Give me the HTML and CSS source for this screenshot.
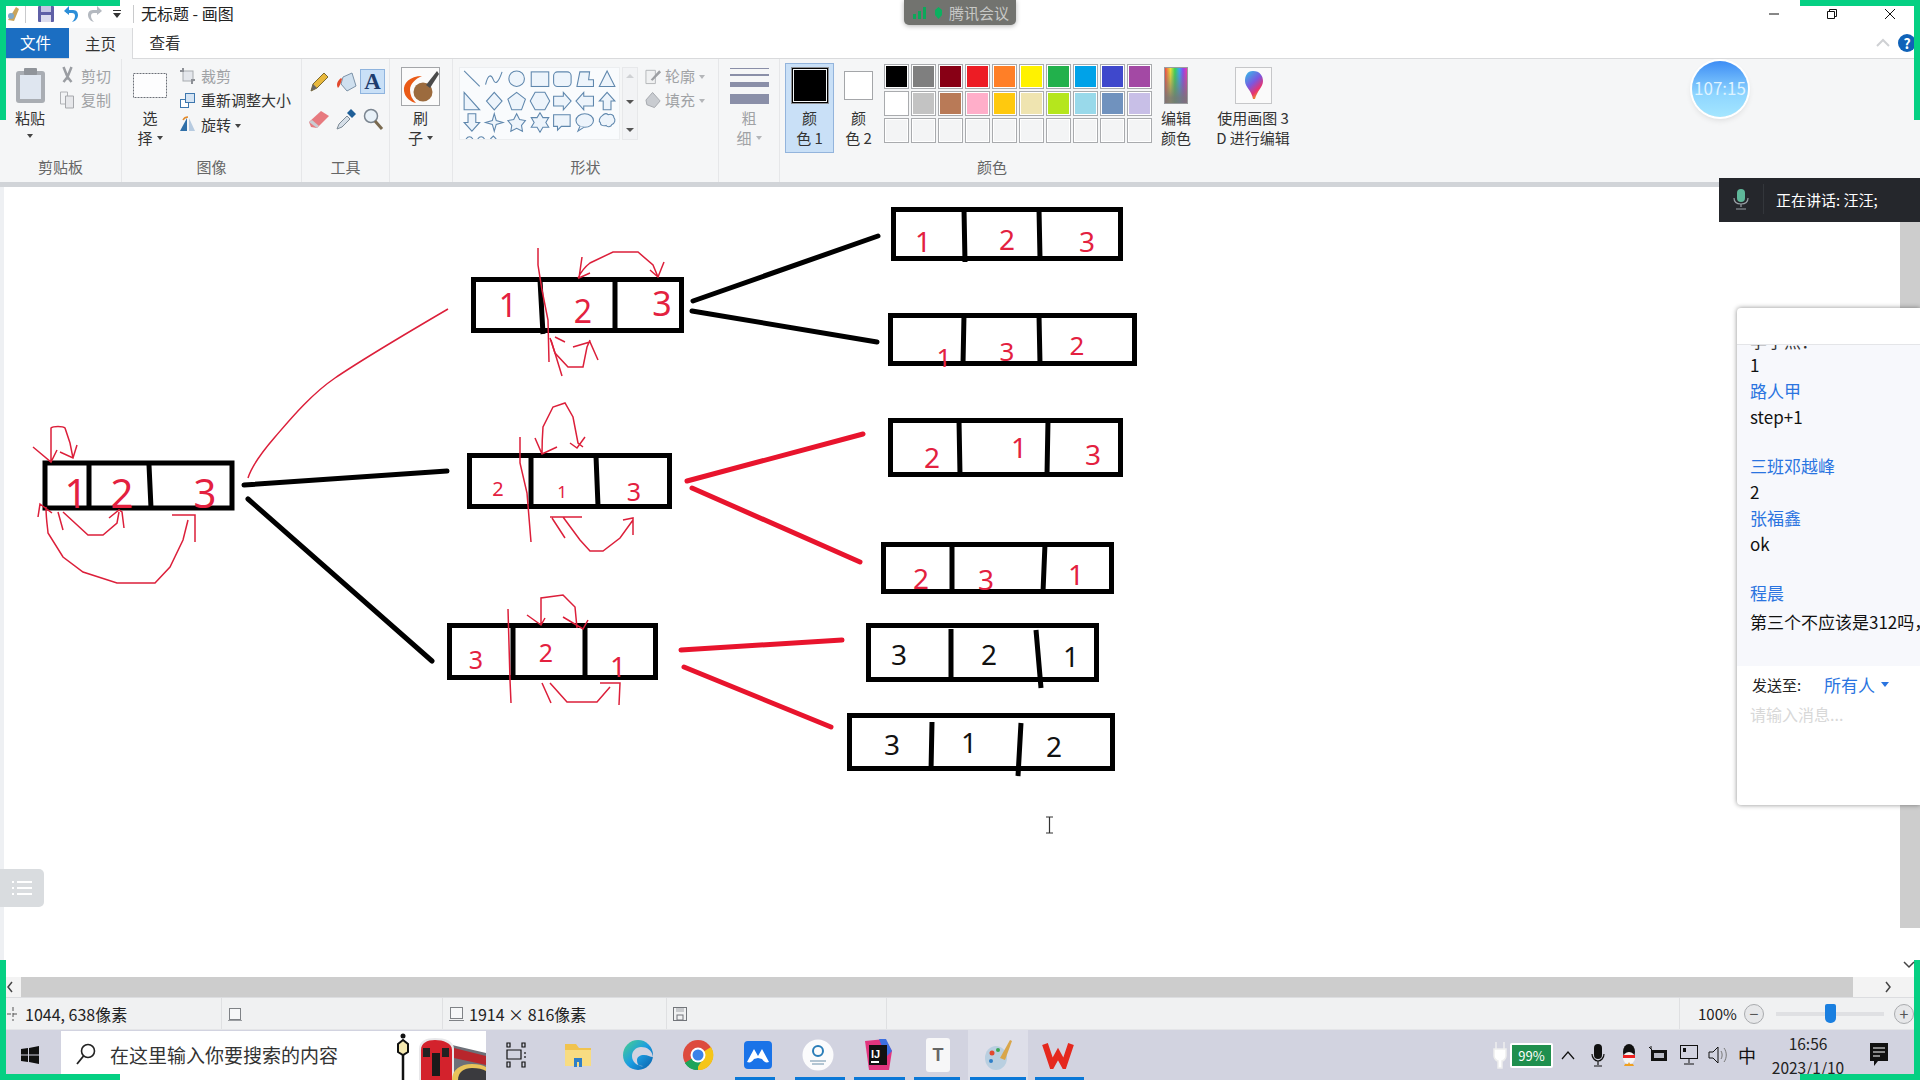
FILE: index.html
```html
<!DOCTYPE html>
<html lang="zh-CN">
<head>
    <meta charset="UTF-8">
    <title>无标题 - 画图</title>
    <link rel="stylesheet" href="styles.css">
</head>
<body>
<div class="app">
    <!-- title bar -->
    <div class="titlebar">
        <svg class="qa qa-paint" width="12" height="20" viewBox="0 0 12 20"><path d="M0 16 8 3l3 2-5 12z" fill="#c9a45c"/><circle cx="3" cy="12" r="3" fill="#7fa8c9"/></svg>
        <span class="qa-sep"></span>
        <svg class="qa qa-save" width="18" height="18" viewBox="0 0 18 18"><rect x="1" y="1" width="16" height="16" rx="1" fill="#5f60a6"/><rect x="4" y="1" width="10" height="6" fill="#c5c6e4"/><rect x="4" y="10" width="10" height="7" fill="#dcdcee"/></svg>
        <svg class="qa qa-undo" width="18" height="20" viewBox="0 0 18 20"><path d="M3 6h7c4 0 5 3 5 5 0 3-2 6-6 7 2-2 3-4 3-6 0-2-1-3-3-3H3z" fill="#2c8ed8"/><path d="M1 7 6 2v9z" fill="#2c8ed8"/></svg>
        <svg class="qa qa-redo" width="18" height="20" viewBox="0 0 18 20"><path d="M15 6H8c-4 0-5 3-5 5 0 3 2 6 6 7-2-2-3-4-3-6 0-2 1-3 3-3h6z" fill="#b4b9c0"/><path d="M17 7 12 2v9z" fill="#b4b9c0"/></svg>
        <svg class="qa qa-more" width="8" height="10" viewBox="0 0 8 10"><path d="M0 1h8v1H0zM0 4h8L4 9z" fill="#333"/></svg>
        <span class="qa-sep qa-sep-2"></span>
        <span class="title-text">无标题 - 画图</span>
        <div class="win-controls">
            <svg width="14" height="14" viewBox="0 0 14 14"><path d="M2 7h10" stroke="#111" stroke-width="1"/></svg>
            <svg width="14" height="14" viewBox="0 0 14 14"><path d="M2.500 4.500h7v7h-7zM4.500 4V2.500h7v7H10" fill="none" stroke="#111" stroke-width="1"/></svg>
            <svg width="14" height="14" viewBox="0 0 14 14"><path d="M2 2l10 10M12 2 2 12" stroke="#111" stroke-width="1"/></svg>
        </div>
    </div>

    <!-- ribbon tabs -->
    <div class="tabs">
        <span class="tab tab-file">文件</span>
        <span class="tab tab-active">主页</span>
        <span class="tab">查看</span>
        <svg class="tabs-chevron" width="14" height="10" viewBox="0 0 14 10"><path d="M1 8l6-6 6 6" fill="none" stroke="#cfd1d4" stroke-width="2"/></svg>
        <span class="help">?</span>
    </div>

    <!-- ribbon -->
    <div class="ribbon">
        <section class="group g-clip">
            <div class="group-body">
                <div class="tall tall-paste">
                    <div class="tall-icon">
                        <svg width="31" height="37" viewBox="0 0 31 37"><rect x="1" y="4" width="29" height="32" rx="3" fill="#a9adb3"/><rect x="5" y="8" width="21" height="24" fill="#dfe6f0"/><rect x="9" y="1" width="13" height="7" rx="1" fill="#90949a"/></svg>
                    </div>
                    <span>粘贴</span>
                    <i class="caret"></i>
                </div>
                <div class="small-col">
                    <div class="small off"><svg width="14" height="20" viewBox="0 0 14 20"><path d="M3 1l4 10 4-10M7 11l-4 5M7 11l4 5" fill="none" stroke="#9a9da2" stroke-width="2.500"/></svg><span>剪切</span></div>
                    <div class="small off"><svg width="16" height="18" viewBox="0 0 16 18"><path d="M1 1h7v12H1z" fill="#f2f3f5" stroke="#b0b2b6"/><path d="M6 5h8v12H6z" fill="#e6e7ea" stroke="#a6a8ac"/></svg><span>复制</span></div>
                </div>
            </div>
            <div class="group-label">剪贴板</div>
        </section>

        <section class="group g-image">
            <div class="group-body">
                <div class="tall tall-select">
                    <div class="tall-icon">
                        <svg width="36" height="37" viewBox="0 0 36 37"><rect x="1.500" y="6.500" width="33" height="24" fill="#fdfdfe" stroke="#6c7078" stroke-dasharray="2 1"/></svg>
                    </div>
                    <span>选</span>
                    <span>择<i class="caret caret-inline"></i></span>
                </div>
                <div class="small-col">
                    <div class="small off"><svg width="17" height="18" viewBox="0 0 17 18"><rect x="4" y="4" width="10" height="10" fill="#e4e7ec" stroke="#a8abb0"/><path d="M1 4h4M4 1v4M13 17v-4M16 13h-4" stroke="#8d9096" stroke-width="2"/></svg><span>裁剪</span></div>
                    <div class="small"><svg width="17" height="18" viewBox="0 0 17 18"><rect x="1.500" y="8.500" width="8" height="8" fill="#fff" stroke="#3e77ae"/><rect x="6.500" y="2.500" width="9" height="9" fill="#d5e4f3" stroke="#3e77ae"/></svg><span>重新调整大小</span></div>
                    <div class="small"><svg width="17" height="18" viewBox="0 0 17 18"><path d="M8 3v13H1z" fill="#2f6fa8"/><path d="M10 3v13h6z" fill="#b7cbe0"/><path d="M4 5c1-2 3-3 5-3" fill="none" stroke="#e28a2b" stroke-width="1.500"/></svg><span>旋转<i class="caret caret-inline"></i></span></div>
                </div>
            </div>
            <div class="group-label">图像</div>
        </section>

        <section class="group g-tools">
            <div class="group-body">
                <div class="tool-grid">
                    <span class="tool"><svg width="22" height="24" viewBox="0 0 22 24"><path d="M3 21l2-7L16 3l4 4L9 18z" fill="#e8b83c" stroke="#7c6a2f"/><path d="M3 21l2-7 4 4z" fill="#666"/></svg></span>
                    <span class="tool"><svg width="22" height="24" viewBox="0 0 22 24"><path d="M8 7l9-4 4 13-9 5-6-7z" fill="#cfe0ef" stroke="#7d93a8"/><path d="M6 8C2 11 1 15 3 18c2-2 3-6 4-9z" fill="#e2492d"/></svg></span>
                    <span class="tool tool-on"><b class="tool-a">A</b></span>
                    <span class="tool"><svg width="24" height="22" viewBox="0 0 24 22"><path d="M2 14 14 3l8 5-12 12-6-1z" fill="#e77a7f"/><path d="M2 14l8 6 2-2-7-6z" fill="#c9ccd2"/></svg></span>
                    <span class="tool"><svg width="22" height="24" viewBox="0 0 22 24"><path d="M2 22l2-5 8-8 3 3-8 8z" fill="#d6dfe8" stroke="#7c8a96"/><path d="M12 6l4-4 5 5-4 4z" fill="#1f5f98"/></svg></span>
                    <span class="tool"><svg width="22" height="24" viewBox="0 0 22 24"><circle cx="9" cy="9" r="6.500" fill="#e8f1f8" stroke="#7a8590" stroke-width="1.500"/><path d="M13 14l7 8" stroke="#7a6a50" stroke-width="3"/></svg></span>
                </div>
            </div>
            <div class="group-label">工具</div>
        </section>

        <section class="group g-brush">
            <div class="group-body">
                <div class="tall tall-brush">
                    <div class="tall-icon">
                        <svg width="39" height="39" viewBox="0 0 39 39"><rect x=".5" y=".5" width="38" height="38" fill="#fbfbfb" stroke="#a4a6a9"/><path d="M21 9C9 9 2 16 3 24c1 7 7 11 12 12-4-4-6-8-6-13 0-6 5-11 12-14z" fill="#ea5a16"/><circle cx="22" cy="25" r="9.500" fill="#9c6b3e"/><path d="M25 18 36 4l2 3-9 14z" fill="#4a4a4a"/></svg>
                    </div>
                    <span>刷</span>
                    <span>子<i class="caret caret-inline"></i></span>
                </div>
            </div>
            <div class="group-label"></div>
        </section>

        <section class="group g-shapes">
            <div class="group-body">
                <svg class="gallery" width="161" height="73" viewBox="0 0 161 73">
                    <g fill="#edf4fb" stroke="#5f87ad" stroke-width="1.100">
                        <path d="M3 3l16 16" fill="none"/>
                        <path d="M25 17c3-12 6-10 8-5s5 4 9-8" fill="none"/>
                        <circle cx="57" cy="11" r="8"/>
                        <rect x="72" y="4" width="18" height="15"/>
                        <rect x="95" y="4" width="18" height="15" rx="4"/>
                        <path d="M119 19l3-15h10l-1 8h5v7z"/>
                        <path d="M150 3l8 16h-16z"/>
                        <path d="M3 25l16 18H3z"/>
                        <path d="M34 25l8 9-8 9-8-9z"/>
                        <path d="M57 25l9 7-4 11H52l-4-11z"/>
                        <path d="M76 25h10l5 9-5 9H76l-5-9z"/>
                        <path d="M95 29h10v-4l8 9-8 9v-4H95z"/>
                        <path d="M136 29h-10v-4l-8 9 8 9v-4h10z"/>
                        <path d="M150 25l8 9h-4v9h-8v-9h-4z"/>
                        <path d="M7 47h8v9h4l-8 9-8-9h4z"/>
                        <path d="M34 47l2 7 7 2-7 2-2 7-2-7-7-2 7-2z"/>
                        <path d="M57 47l3 6 6 1-4 5 1 6-6-3-6 3 1-6-4-5 6-1z"/>
                        <path d="M81 46l3 5 6 0-3 5 3 5-6 0-3 5-3-5-6 0 3-5-3-5 6 0z"/>
                        <path d="M95 48h17v12h-9l-4 4v-4h-4z"/>
                        <ellipse cx="127" cy="54" rx="9" ry="7"/>
                        <path d="M122 60l-2 5 6-4"/>
                        <path d="M145 49c3-3 5-2 6-1 3-1 6 0 6 3 2 2 1 6-2 7-1 3-5 3-6 1-3 1-6 0-6-3-2-1-1-5 2-7z"/>
                        <path d="M5 73c2-3 5-3 7 0M17 73c2-3 5-3 7 0M30 73l3-3 3 3" fill="none"/>
                    </g>
                </svg>
                <div class="gallery-scroll">
                    <i class="gs-up"></i><i class="gs-down"></i><i class="gs-more"></i>
                </div>
                <div class="small-col small-col-shapes">
                    <div class="small off"><svg width="18" height="18" viewBox="0 0 18 18"><path d="M1 3h10v14H1z" fill="#f0f1f2" stroke="#b3b5b8"/><path d="M6 13 15 3l2 2-9 9z" fill="#9d9fa3"/></svg><span>轮廓<i class="caret caret-inline caret-pale"></i></span></div>
                    <div class="small off"><svg width="18" height="18" viewBox="0 0 18 18"><path d="M8 1l8 9-6 7-8-3-1-5z" fill="#c9ccd1" stroke="#a4a7ac"/></svg><span>填充<i class="caret caret-inline caret-pale"></i></span></div>
                </div>
            </div>
            <div class="group-label">形状</div>
        </section>

        <section class="group g-thick">
            <div class="group-body">
                <div class="tall tall-thick off">
                    <div class="tall-icon thick-icon">
                        <i class="thick-1"></i><i class="thick-2"></i><i class="thick-3"></i><i class="thick-4"></i>
                    </div>
                    <span>粗</span>
                    <span>细<i class="caret caret-inline caret-pale"></i></span>
                </div>
            </div>
            <div class="group-label"></div>
        </section>

        <section class="group g-colors">
            <div class="group-body">
                <div class="tall tall-color tall-color-on">
                    <div class="tall-icon"><i class="color-big"></i></div>
                    <span>颜</span>
                    <span>色 1</span>
                </div>
                <div class="tall tall-color">
                    <div class="tall-icon"><i class="color-small"></i></div>
                    <span>颜</span>
                    <span>色 2</span>
                </div>
                <div class="palette">
                    <i class="sw c1"></i><i class="sw c2"></i><i class="sw c3"></i><i class="sw c4"></i><i class="sw c5"></i><i class="sw c6"></i><i class="sw c7"></i><i class="sw c8"></i><i class="sw c9"></i><i class="sw c10"></i>
                    <i class="sw c11"></i><i class="sw c12"></i><i class="sw c13"></i><i class="sw c14"></i><i class="sw c15"></i><i class="sw c16"></i><i class="sw c17"></i><i class="sw c18"></i><i class="sw c19"></i><i class="sw c20"></i>
                    <i class="sw"></i><i class="sw"></i><i class="sw"></i><i class="sw"></i><i class="sw"></i><i class="sw"></i><i class="sw"></i><i class="sw"></i><i class="sw"></i><i class="sw"></i>
                </div>
                <div class="tall tall-edit">
                    <div class="tall-icon"><i class="rainbow"></i></div>
                    <span>编辑</span>
                    <span>颜色</span>
                </div>
            </div>
            <div class="group-label">颜色</div>
        </section>

        <section class="group g-p3d">
            <div class="group-body">
                <div class="tall tall-p3d">
                    <div class="tall-icon">
                        <svg width="37" height="37" viewBox="0 0 37 37"><defs><linearGradient id="p3d" x1="0" y1="0" x2=".6" y2="1"><stop offset="0" stop-color="#2fc3e8"/><stop offset=".5" stop-color="#7a58e0"/><stop offset=".8" stop-color="#e8326f"/><stop offset="1" stop-color="#f0a020"/></linearGradient></defs><rect x=".5" y=".5" width="36" height="36" fill="#fafafa" stroke="#c6c7c9"/><path d="M18 4c7 0 10 5 10 10 0 6-6 10-8 18h-2c-1-8-8-12-8-18C10 9 12 4 18 4z" fill="url(#p3d)"/></svg>
                    </div>
                    <span>使用画图 3</span>
                    <span>D 进行编辑</span>
                </div>
            </div>
        </section>
    </div>
    <div class="ribbon-edge"></div>

    <!-- drawing surface -->
    <div class="canvas">
        <svg class="drawing" viewBox="0 187 1920 790" width="1920" height="790">
            <rect x="0" y="187" width="4" height="790" fill="#eef0f3"/>

            <g class="boxes">
                <rect x="45" y="463" width="187" height="45"/>
                <path d="M89 463v45M149 465l2 43"/>
                <rect x="473.500" y="279.500" width="208" height="51"/>
                <path d="M540 280l3 54M615 280v50"/>
                <rect x="469.500" y="455.500" width="200" height="51"/>
                <path d="M531 456v50M596 456l2 50"/>
                <rect x="449.500" y="625.500" width="206" height="52"/>
                <path d="M513 625v53M585 625v53"/>
                <rect x="893.500" y="209.500" width="227" height="49"/>
                <path d="M964 209l1 53M1039 209l1 49"/>
                <rect x="890.500" y="315.500" width="244" height="48"/>
                <path d="M964 315l-1 49M1039 315l1 49"/>
                <rect x="890.500" y="420.500" width="230" height="54"/>
                <path d="M959 420l1 55M1048 420l-1 55"/>
                <rect x="883.500" y="544.500" width="228" height="47"/>
                <path d="M952 544v48M1045 544l-2 48"/>
                <rect x="868.500" y="625.500" width="228" height="54"/>
                <path d="M951 629v49M1036 630l5 58"/>
                <rect x="849.500" y="715.500" width="263" height="53"/>
                <path d="M932 722l-1 49M1021 723l-3 53"/>
            </g>

            <g class="ink-black">
                <path d="M244 485 447 471M248 499 432 661M693 301 878 236M692 311 877 342"/>
            </g>
            <g class="ink-red">
                <path d="M687 481 863 434M692 488 860 562M681 650 842 640M684 667 831 727"/>
            </g>

            <g class="pen">
                <path d="M248 478C252 465 262 452 275 437S310 395 335 378 395 340 448 309"/>
                <path d="M51 462V428C53 426 63 426 65 428L70 443 73 458M33 447 51 462 57 450M60 452 73 458 77 445"/>
                <path d="M63 512 88 535H103L117 523 119 512M58 512 63 530M109 518 119 510 122 512 124 528"/>
                <path d="M46 507C46 520 48 530 48 533L63 557 83 572 117 583H155L170 567 183 540 188 520M38 517 40 504 52 513M172 515H195V542"/>
                <path d="M538 248V265L542 290 548 320 549 362M551 340 562 376"/>
                <path d="M578 278C582 270 586 266 590 263L613 252H638L653 265 658 277M582 257 579 278 590 273M650 270 658 277 664 262"/>
                <path d="M550 338 555 353 568 367H583L587 347 590 340M573 347 590 342 598 360M555 337 565 342"/>
                <path d="M520 437V463L527 493 531 542"/>
                <path d="M542 454C542 440 543 427 543 427L553 407 565 403 573 417 578 443 583 447M535 438 542 454 557 447M570 443 577 448 585 437"/>
                <path d="M563 517 580 540 590 551H603L620 538 633 520M550 517H582M552 518 565 538M623 520 633 518V535"/>
                <path d="M508 609 510 680 511 703"/>
                <path d="M541 625V598L563 595 575 607 577 628M527 615 541 625 545 618M563 617 583 629 588 620"/>
                <path d="M550 683 567 702H597L610 687M542 683 551 703M600 683H620L619 705"/>
            </g>

            <g class="num num-red">
                <text x="76" y="508" font-size="40">1</text>
                <text x="122" y="508" font-size="40">2</text>
                <text x="205" y="508" font-size="40">3</text>
                <text x="508" y="317" font-size="32">1</text>
                <text x="583" y="323" font-size="32">2</text>
                <text x="662" y="316" font-size="34">3</text>
                <text x="498" y="496" font-size="20">2</text>
                <text x="562" y="498" font-size="17">1</text>
                <text x="634" y="501" font-size="25">3</text>
                <text x="476" y="669" font-size="25">3</text>
                <text x="546" y="662" font-size="25">2</text>
                <text x="618" y="677" font-size="28">1</text>
                <text x="923" y="252" font-size="28">1</text>
                <text x="1007" y="250" font-size="28">2</text>
                <text x="1087" y="252" font-size="28">3</text>
                <text x="944" y="367" font-size="26">1</text>
                <text x="1007" y="361" font-size="26">3</text>
                <text x="1077" y="355" font-size="26">2</text>
                <text x="932" y="468" font-size="28">2</text>
                <text x="1019" y="458" font-size="28">1</text>
                <text x="1093" y="465" font-size="28">3</text>
                <text x="921" y="589" font-size="28">2</text>
                <text x="986" y="590" font-size="28">3</text>
                <text x="1076" y="585" font-size="28">1</text>
            </g>
            <g class="num num-black">
                <text x="899" y="665" font-size="28">3</text>
                <text x="989" y="665" font-size="28">2</text>
                <text x="1071" y="667" font-size="28">1</text>
                <text x="892" y="755" font-size="28">3</text>
                <text x="969" y="753" font-size="28">1</text>
                <text x="1054" y="757" font-size="28">2</text>
            </g>
        </svg>

        <div class="list-toggle">
            <svg width="22" height="18" viewBox="0 0 22 18"><path d="M6 3h15M6 9h15M6 15h15M1 3h2M1 9h2M1 15h2" stroke="#fff" stroke-width="2"/></svg>
        </div>
        <svg class="ibeam" width="9" height="18" viewBox="0 0 9 18"><path d="M1 1h7M1 17h7M4.500 1v16" stroke="#333" stroke-width="1.200" fill="none"/></svg>
    </div>

    <!-- horizontal scroll bar -->
    <div class="hscroll">
        <svg width="8" height="12" viewBox="0 0 8 12"><path d="M6 1 2 6l4 5" fill="none" stroke="#444" stroke-width="1.500"/></svg>
        <div class="hscroll-thumb"></div>
        <svg class="hscroll-next" width="8" height="12" viewBox="0 0 8 12"><path d="M2 1l4 5-4 5" fill="none" stroke="#444" stroke-width="1.500"/></svg>
    </div>

    <!-- status bar -->
    <div class="status">
        <div class="st st-pos">
            <svg width="14" height="16" viewBox="0 0 14 16"><path d="M7 1v14M1 8h12" stroke="#555" stroke-dasharray="4 2"/></svg>
            <span>1044, 638像素</span>
        </div>
        <div class="st st-sel">
            <svg width="16" height="16" viewBox="0 0 16 16"><rect x="2.500" y="2.500" width="11" height="11" fill="#f6f7f8" stroke="#7f8286"/><path d="M1 14.500h14" stroke="#9a9da1"/></svg>
        </div>
        <div class="st st-size">
            <svg width="16" height="16" viewBox="0 0 16 16"><rect x="2.500" y="1.500" width="12" height="11" fill="#f6f7f8" stroke="#7f8286"/><path d="M1 14.500h15" stroke="#7f8286"/></svg>
            <span>1914 × 816像素</span>
        </div>
        <div class="st st-save">
            <svg width="16" height="16" viewBox="0 0 16 16"><rect x="1.500" y="1.500" width="13" height="13" fill="none" stroke="#72757a"/><rect x="4" y="2" width="8" height="4" fill="#c8cacd"/><rect x="5" y="9" width="6" height="5" fill="none" stroke="#72757a"/></svg>
        </div>
        <div class="st st-blank"></div>
        <div class="st st-zoom">
            <span class="zoom-value">100%</span>
            <span class="zoom-btn">−</span>
            <div class="zoom-track"><i class="zoom-thumb"></i></div>
            <span class="zoom-btn">+</span>
        </div>
    </div>

    <!-- windows taskbar -->
    <div class="taskbar">
        <svg class="start" width="18" height="18" viewBox="0 0 18 18"><path d="M0 3l7-1v6.500H0zM8 2l10-2v8.500H8zM0 9.500h7V16l-7-1zM8 9.500h10V18L8 16z" fill="#111"/></svg>
        <div class="search">
            <svg width="24" height="24" viewBox="0 0 24 24"><circle cx="14" cy="9" r="6.500" fill="none" stroke="#222" stroke-width="1.600"/><path d="M9.500 14 3 22" stroke="#222" stroke-width="1.800"/></svg>
            <span>在这里输入你要搜索的内容</span>
            <div class="search-art">
                <svg width="90" height="49" viewBox="0 0 90 49">
                    <path d="M7 22V49" stroke="#111" stroke-width="2.500"/>
                    <path d="M2 13l5-4 5 4v8l-5 3-5-3z" fill="#f5e9b0" stroke="#111" stroke-width="2"/>
                    <circle cx="7" cy="5" r="2.500" fill="#111"/>
                    <path d="M56 14 90 22v27H56z" fill="#6d7078"/>
                    <path d="M58 17 90 25v9L58 27z" fill="#b8262c"/>
                    <path d="M23 49V18C23 10 30 7 39 7c10 0 19 3 19 11v31z" fill="#e8e8ea"/>
                    <path d="M25 49V19C25 12 31 9 39 9s17 3 17 10v30z" fill="#d3222c"/>
                    <rect x="36" y="22" width="8" height="23" fill="#1a1a1a"/>
                    <rect x="27" y="17" width="7" height="9" fill="#222"/>
                    <rect x="46" y="17" width="7" height="9" fill="#222"/>
                    <path d="M56 49c0-10 8-16 20-16 6 0 11 1 14 3v13z" fill="#e8c25a"/>
                    <path d="M62 49c0-8 6-12 14-12 6 0 11 1 14 3v9z" fill="#3a3a3e"/>
                </svg>
            </div>
        </div>
        <div class="task-icons">
            <span class="task task-view"><svg width="20" height="26" viewBox="0 0 20 26"><path d="M1 1h3v4H1zM16 1h3v4h-3zM1 8h14v9H1zM1 20h3v5H1zM16 20h3v5h-3z" fill="none" stroke="#111" stroke-width="1.200"/><path d="M19 10v2M19 14v2" stroke="#111" stroke-width="1.200"/></svg></span>
            <span class="task"><svg width="30" height="30" viewBox="0 0 30 30"><path d="M2 4h11l3 4h12v18H2z" fill="#f1c34e"/><path d="M2 10h26v16H2z" fill="#f8dc82"/><path d="M11 27V18h8v9h-3v-5h-2v5z" fill="#2f7fc8"/></svg></span>
            <span class="task"><svg width="32" height="32" viewBox="0 0 32 32"><defs><linearGradient id="edge" x1="0" y1="0" x2="1" y2="1"><stop offset="0" stop-color="#4bd28a"/><stop offset=".5" stop-color="#1b9de2"/><stop offset="1" stop-color="#0a5ea8"/></linearGradient></defs><circle cx="16" cy="16" r="15" fill="url(#edge)"/><path d="M31 18c-1-7-6-10-12-10-5 0-9 4-9 9 0 6 5 10 11 10-4 1-6-2-6-6 0-3 3-5 7-5 4 0 6 2 9 2z" fill="#d2d3e0"/></svg></span>
            <span class="task"><svg width="32" height="32" viewBox="0 0 32 32"><circle cx="16" cy="16" r="15" fill="#dd4b3e"/><path d="M16 16 3 24A15 15 0 0 0 16 31z" fill="#1ea45a"/><path d="M16 16 29 8A15 15 0 0 1 16 31z" fill="#f5c518"/><path d="M16 16 3 24A15 15 0 0 0 14 31L22 18z" fill="#1ea45a"/><circle cx="16" cy="16" r="7.500" fill="#fff"/><circle cx="16" cy="16" r="5.500" fill="#3b82e8"/></svg></span>
            <span class="task"><svg width="30" height="32" viewBox="0 0 30 32"><rect x="1" y="2" width="28" height="28" rx="4" fill="#1a73e8"/><path d="M4 23 11 10l4 7 4-7 7 13c-3 1-5 0-7-3l-4-1-4 1c-2 3-4 4-7 3z" fill="#fff"/></svg></span>
            <span class="task"><svg width="32" height="36" viewBox="0 0 32 36"><circle cx="16" cy="18" r="15.500" fill="#fbfbfc"/><circle cx="16" cy="14" r="5" fill="none" stroke="#2a7db8" stroke-width="2"/><path d="M8 24h16M10 27h12" stroke="#6a8fa8"/></svg></span>
            <span class="task"><svg width="30" height="34" viewBox="0 0 30 34"><path d="M2 3 22 1l7 12-3 19H6z" fill="#e2357e"/><path d="M16 1h7l6 12-6 6z" fill="#3d6fe0"/><rect x="6" y="7" width="18" height="20" fill="#111"/><text class="ij" x="8" y="20">IJ</text><rect x="8" y="23" width="8" height="2" fill="#fff"/></svg></span>
            <span class="task"><svg width="26" height="36" viewBox="0 0 26 36"><rect x="1" y="1" width="24" height="34" rx="3" fill="#f7f7f8"/><text class="doc-t" x="13" y="24">T</text></svg></span>
            <span class="task task-on"><svg width="30" height="36" viewBox="0 0 30 36"><ellipse cx="13" cy="21" rx="11" ry="12" fill="#b9cfe0"/><circle cx="9" cy="16" r="2.500" fill="#e2492d"/><circle cx="15" cy="13" r="2" fill="#3aa655"/><circle cx="8" cy="24" r="2" fill="#2f7fc8"/><path d="M17 21 27 3l2 1-7 19z" fill="#d9a64a"/></svg></span>
            <span class="task"><svg width="32" height="28" viewBox="0 0 32 28"><path d="M3 3l7 21 6-11 6 11 7-21" fill="none" stroke="#e5281e" stroke-width="6"/></svg></span>
        </div>
        <div class="tray">
            <svg class="tray-plug" width="16" height="28" viewBox="0 0 16 28"><path d="M4 1v7M12 1v7M2 8h12v7c0 3-3 5-4 5v7H6v-7c-1 0-4-2-4-5z" fill="#fff" stroke="#eee" stroke-width="1.500"/></svg>
            <div class="battery"><span>99%</span></div>
            <svg class="tray-caret" width="14" height="10" viewBox="0 0 14 10"><path d="M1 9l6-7 6 7" fill="none" stroke="#111" stroke-width="1.200"/></svg>
            <svg class="tray-i t-mic" width="14" height="24" viewBox="0 0 14 24"><rect x="3" y="1" width="8" height="15" rx="4" fill="#111"/><path d="M1 11c0 4 3 7 6 7s6-3 6-7M7 18v4M3 23h8" fill="none" stroke="#111" stroke-width="1.200"/></svg>
            <svg class="tray-i t-qq" width="18" height="24" viewBox="0 0 18 24"><ellipse cx="9" cy="9" rx="6" ry="8" fill="#111"/><ellipse cx="9" cy="15" rx="6" ry="6" fill="#f4f4f4"/><path d="M3 12h12v3H3z" fill="#e22"/><path d="M5 21h3l1-2 1 2h3l1 2H4z" fill="#f0a020"/></svg>
            <svg class="tray-i" width="22" height="20" viewBox="0 0 22 20"><rect x="4" y="5" width="16" height="11" fill="#111"/><rect x="7" y="8" width="10" height="5" fill="#b9bbc6"/><path d="M2 2l3 3M4 1v3" stroke="#111"/></svg>
            <svg class="tray-i" width="22" height="24" viewBox="0 0 22 24"><rect x="2.500" y="2.500" width="17" height="13" fill="none" stroke="#111"/><rect x="5" y="5" width="3" height="4" fill="#111"/><path d="M11 16v4M6 21h10" stroke="#111"/></svg>
            <svg class="tray-i t-vol" width="20" height="24" viewBox="0 0 20 24"><path d="M2 9h4l5-5v16l-5-5H2z" fill="none" stroke="#111"/><path d="M14 8c1.500 2 1.500 6 0 8M17 5c3 4 3 10 0 14" fill="none" stroke="#777"/></svg>
            <span class="ime">中</span>
            <div class="clock"><span>16:56</span><span>2023/1/10</span></div>
            <svg class="tray-note" width="20" height="26" viewBox="0 0 20 26"><path d="M1 1h18v18H9l-4 5v-5H1z" fill="#111"/><path d="M4 6h12M4 10h12M4 14h7" stroke="#fff"/></svg>
        </div>
        <div class="task-lines">
            <i class="line-1"></i><i class="line-2"></i><i class="line-3"></i><i class="line-4"></i><i class="line-5"></i><i class="line-6"></i>
        </div>
    </div>

    <!-- overlays from the screen share -->
    <i class="frame frame-tl-h"></i><i class="frame frame-tl-v"></i>
    <i class="frame frame-tr-h"></i><i class="frame frame-tr-v"></i>
    <i class="frame frame-bl-h"></i><i class="frame frame-bl-v"></i>
    <i class="frame frame-br-h"></i><i class="frame frame-br-v"></i>

    <div class="meeting-tag">
        <svg width="16" height="14" viewBox="0 0 16 14"><path d="M1 8h3v5H1zM6 5h3v8H6zM11 1h3v12h-3z" fill="#0ca85a"/></svg>
        <svg width="9" height="14" viewBox="0 0 9 14"><path d="M4.500 1 8 4v5l-3.500 4L1 9V4z" fill="#0cb060"/></svg>
        <span>腾讯会议</span>
    </div>

    <div class="timer">107:15</div>

    <div class="speaking">
        <svg width="16" height="22" viewBox="0 0 16 22"><rect x="4" y="1" width="8" height="13" rx="4" fill="#5fb89a"/><path d="M1 10c0 4 3 6 7 6s7-2 7-6M8 16v3M3 21h10" fill="none" stroke="#9aa0a6" stroke-width="1.200"/></svg>
        <i class="speaking-sep"></i>
        <span>正在讲话: 汪汪;</span>
    </div>

    <i class="side-scroll side-scroll-top"></i>
    <i class="side-scroll side-scroll-bottom"></i>
    <svg class="side-arrow" width="12" height="8" viewBox="0 0 12 8"><path d="M1 1l5 5 5-5" fill="none" stroke="#444" stroke-width="1.500"/></svg>

    <div class="chat">
        <div class="chat-head"></div>
        <div class="chat-list">
            <div class="msg-clip">李子杰：</div>
            <div class="msg">1</div>
            <div class="msg name">路人甲</div>
            <div class="msg spaced">step+1</div>
            <div class="msg name">三班邓越峰</div>
            <div class="msg">2</div>
            <div class="msg name">张福鑫</div>
            <div class="msg spaced">ok</div>
            <div class="msg name">程晨</div>
            <div class="msg msg-last">第三个不应该是312吗，</div>
        </div>
        <div class="chat-send">
            <span class="send-label">发送至:</span>
            <span class="send-to">所有人</span>
            <i class="send-caret"></i>
        </div>
        <div class="chat-input">请输入消息...</div>
    </div>
</div>
</body>
</html>
```
FILE: styles.css
```css
* {
    box-sizing: border-box;
}
html, body {
    margin: 0;
    height: 100%;
}
body {
    font-family: "Noto Sans CJK SC", "Noto Sans", sans-serif;
    font-size: 15px;
    color: #333;
    background: #fff;
    overflow: hidden;
}
i {
    font-style: normal;
}
svg {
    display: block;
    flex: none;
}
.app {
    position: relative;
    width: 1920px;
    height: 1080px;
    display: flex;
    flex-direction: column;
    overflow: hidden;
}

/* title bar */
.titlebar {
    height: 28px;
    display: flex;
    align-items: center;
    background: #fff;
    flex: none;
}
.qa-paint {
    margin-left: 8px;
}
.qa-sep {
    width: 1px;
    height: 18px;
    background: #c9cacc;
    margin-left: 5px;
}
.qa-save {
    margin-left: 11px;
}
.qa-undo {
    margin-left: 8px;
}
.qa-redo {
    margin-left: 4px;
}
.qa-more {
    margin-left: 10px;
}
.qa-sep-2 {
    margin-left: 12px;
}
.title-text {
    margin-left: 7px;
    padding-bottom: 2px;
    font-size: 16px;
    color: #222;
}
.win-controls {
    margin-left: auto;
    display: flex;
    gap: 44px;
    padding-right: 23px;
}

/* tabs */
.tabs {
    height: 31px;
    display: flex;
    align-items: stretch;
    padding-left: 6px;
    background: #fff;
    border-bottom: 1px solid #d9dadc;
    flex: none;
}
.tab {
    width: 64px;
    padding-bottom: 2px;
    display: flex;
    align-items: center;
    justify-content: center;
    font-size: 15.500px;
    color: #333;
}
.tab-file {
    background: #1b6ec2;
    color: #fff;
    width: 63px;
    padding-right: 4px;
}
.tab-active {
    background: #f5f6f7;
    border-right: 1px solid #d9dadc;
    margin-bottom: -1px;
}
.tabs-chevron {
    margin-left: auto;
    align-self: center;
    margin-right: 8px;
}
.help {
    align-self: center;
    width: 18px;
    height: 18px;
    margin-right: 4px;
    border-radius: 50%;
    background: #0f62b8;
    color: #fff;
    font-size: 14px;
    font-weight: 700;
    line-height: 18px;
    text-align: center;
}

/* ribbon */
.ribbon {
    height: 123px;
    display: flex;
    background: #f5f6f7;
    flex: none;
}
.ribbon-edge {
    height: 5px;
    background: #d1d4d8;
    flex: none;
}
.group {
    display: flex;
    flex-direction: column;
    border-right: 1px solid #e6e7e9;
    flex: none;
}
.group-body {
    height: 102px;
    padding-top: 8px;
    display: flex;
    align-items: flex-start;
}
.group-label {
    height: 20px;
    margin-top: -3px;
    line-height: 18px;
    text-align: center;
    font-size: 15px;
    color: #666;
}
.g-clip {
    width: 122px;
}
.g-image {
    width: 180px;
}
.g-tools {
    width: 88px;
}
.g-brush {
    width: 63px;
}
.g-shapes {
    width: 266px;
}
.g-thick {
    width: 61px;
}
.g-colors {
    width: 424px;
    border-right: none;
}
.g-p3d {
    width: 98px;
    border-right: none;
}
.tall {
    display: flex;
    flex-direction: column;
    align-items: center;
    font-size: 15px;
    line-height: 19.500px;
    color: #333;
    flex: none;
    white-space: nowrap;
}
.tall-icon {
    height: 37px;
    margin-bottom: 4px;
    display: flex;
    align-items: flex-start;
    justify-content: center;
}
.off,
.off span {
    color: #a0a2a5;
}
.caret {
    display: block;
    width: 0;
    height: 0;
    margin-top: 6px;
    border: 3px solid transparent;
    border-top: 4px solid #444;
    border-bottom: 0;
}
.caret-inline {
    display: inline-block;
    margin: 0 0 2px 4px;
    vertical-align: middle;
}
.caret-pale {
    border-top-color: #b4b6b9;
}
.tall-paste {
    width: 46px;
    margin-left: 7px;
}
.small-col {
    margin-top: -4px;
    margin-left: 6px;
}
.small {
    height: 24.500px;
    display: flex;
    align-items: center;
    gap: 5px;
    font-size: 15px;
    color: #333;
    white-space: nowrap;
}
.small svg {
    width: 17px;
}
.tall-select {
    width: 36px;
    margin-left: 10px;
}
.g-image .small-col {
    margin-left: 11px;
}
.small-col .small:first-child svg,
.small-col-shapes .small svg {
    margin-top: 1px;
}
.tool-grid {
    display: grid;
    grid-template-columns: repeat(3, 27px);
    grid-auto-rows: 25px;
    row-gap: 12px;
    margin: 2px 0 0 3px;
}
.tool {
    display: flex;
    align-items: center;
    justify-content: center;
}
.tool-on {
    margin: 0 1px;
    background: #c9e0f7;
    border: 1px solid #8fb4de;
}
.tool-a {
    font-family: "Liberation Serif", serif;
    font-size: 23px;
    color: #1f3d6e;
    font-weight: 700;
}
.tall-brush {
    width: 39px;
    margin-left: 11px;
}
.gallery {
    margin-left: 6px;
    background: #f9fbfd;
    border: 1px solid #eceef0;
}
.gallery-scroll {
    width: 16px;
    height: 73px;
    margin-left: 2px;
    background: #f2f3f5;
    border: 1px solid #e7e8ea;
    position: relative;
}
.gs-up,
.gs-down,
.gs-more {
    position: absolute;
    left: 3px;
    width: 0;
    border: 4px solid transparent;
}
.gs-up {
    top: 6px;
    border-bottom-color: #cfd1d4;
    border-top: 0;
}
.gs-down {
    top: 32px;
    border-top-color: #555;
    border-bottom: 0;
}
.gs-more {
    top: 60px;
    border-top-color: #555;
    border-bottom: 0;
}
.small-col-shapes {
    margin-left: 7px;
}
.small-col-shapes .small {
    gap: 3px;
}
.tall-thick {
    width: 60px;
}
.thick-icon {
    display: block;
    width: 39px;
    padding-top: 1px;
}
.thick-icon i {
    display: block;
    background: #8a8fa8;
}
.thick-1 {
    height: 1px;
    margin-bottom: 5px;
}
.thick-2 {
    height: 2px;
    margin-bottom: 6px;
}
.thick-3 {
    height: 5px;
    margin-bottom: 7px;
}
.thick-4 {
    height: 10px;
}
.tall-color {
    width: 49px;
    height: 90px;
    margin-top: -4px;
    padding-top: 3px;
    border: 1px solid transparent;
}
.tall-color-on {
    margin-left: 5px;
    background: #c9e0f7;
    border-color: #93b4dc;
}
.color-big {
    display: block;
    width: 38px;
    height: 37px;
    background: #000;
    outline: 1px solid #f4f6f8;
    outline-offset: -3px;
    border: 1px solid #8d9095;
}
.color-small {
    display: block;
    width: 29px;
    height: 29px;
    margin-top: 4px;
    background: #fff;
    border: 1px solid #a4a6a9;
}
.palette {
    display: grid;
    grid-template-columns: repeat(10, 25px);
    grid-auto-rows: 25px;
    gap: 2px;
    margin: -3px 0 0 1px;
}
.sw {
    display: block;
    border: 1px solid #a9abae;
    outline: 1px solid #fff;
    outline-offset: -2px;
    background: #f3f4f5;
}
.c1 { background: #000; }
.c2 { background: #7f7f7f; }
.c3 { background: #880015; }
.c4 { background: #ed1c24; }
.c5 { background: #ff7f27; }
.c6 { background: #fff200; }
.c7 { background: #22b14c; }
.c8 { background: #00a2e8; }
.c9 { background: #3f48cc; }
.c10 { background: #a349a4; }
.c11 { background: #fff; }
.c12 { background: #c3c3c3; }
.c13 { background: #b97a57; }
.c14 { background: #ffaec9; }
.c15 { background: #ffc90e; }
.c16 { background: #efe4b0; }
.c17 { background: #b5e61d; }
.c18 { background: #99d9ea; }
.c19 { background: #7092be; }
.c20 { background: #c8bfe7; }
.tall-edit {
    width: 48px;
}
.rainbow {
    display: block;
    width: 24px;
    height: 37px;
    border: 1px solid #9a9c9f;
    background: linear-gradient(180deg, rgba(255, 255, 255, .1), rgba(120, 120, 120, .9) 85%), linear-gradient(90deg, #f03030, #f0e020 25%, #20d040 45%, #20a0f0 65%, #8030f0 82%, #f020a0);
}
.tall-p3d {
    width: 98px;
}

/* canvas */
.canvas {
    height: 790px;
    position: relative;
    background: #fff;
    flex: none;
}
.drawing {
    display: block;
}
.boxes {
    fill: #fff;
    stroke: #000;
    stroke-width: 5;
}
.ink-black {
    fill: none;
    stroke: #000;
    stroke-width: 5;
    stroke-linecap: round;
}
.ink-red {
    fill: none;
    stroke: #e8142d;
    stroke-width: 5;
    stroke-linecap: round;
}
.pen {
    fill: none;
    stroke: #dc1f3a;
    stroke-width: 1.500;
}
.num {
    font-family: "Noto Sans", "Open Sans", sans-serif;
    text-anchor: middle;
}
.num-red {
    fill: #e3213f;
}
.num-black {
    fill: #111;
}
.list-toggle {
    position: absolute;
    left: 0;
    top: 682px;
    width: 44px;
    height: 38px;
    border-radius: 0 5px 5px 0;
    background: #d9dcdf;
    display: flex;
    align-items: center;
    justify-content: center;
}
.ibeam {
    position: absolute;
    left: 1045px;
    top: 629px;
}

/* scroll bar */
.hscroll {
    height: 20px;
    display: flex;
    align-items: center;
    padding-left: 6px;
    background: #f3f3f3;
    flex: none;
}
.hscroll-thumb {
    width: 1832px;
    height: 20px;
    margin-left: 7px;
    background: #cdcdcd;
}
.hscroll-next {
    margin-left: 31px;
}

/* status bar */
.status {
    height: 33px;
    display: flex;
    background: #f0f1f2;
    border-top: 1px solid #dcdde0;
    border-bottom: 1px solid #e4e5e8;
    flex: none;
}
.st {
    display: flex;
    align-items: center;
    gap: 5px;
    font-size: 16px;
    color: #222;
    border-right: 1px solid #dfe0e2;
    flex: none;
    white-space: nowrap;
}
.st-pos {
    width: 222px;
    padding-left: 6px;
}
.st-sel {
    width: 221px;
    padding-left: 5px;
}
.st-size {
    width: 224px;
    padding-left: 5px;
}
.st-save {
    width: 220px;
    padding-left: 5px;
}
.st-blank {
    width: 793px;
}
.st-zoom {
    width: 240px;
    padding-left: 18px;
    border-right: none;
    gap: 0;
    font-size: 15px;
}
.zoom-value {
    width: 46px;
}
.zoom-btn {
    width: 20px;
    height: 20px;
    border: 1px solid #a9abae;
    border-radius: 50%;
    background: #e6e7e9;
    color: #555;
    font-size: 16px;
    line-height: 16px;
    text-align: center;
    flex: none;
}
.zoom-track {
    width: 108px;
    height: 4px;
    margin: 0 10px 0 12px;
    background: #dfe0e3;
    position: relative;
    flex: none;
}
.zoom-thumb {
    position: absolute;
    left: 49px;
    top: -8px;
    width: 11px;
    height: 19px;
    background: #1a7fe0;
    border-radius: 2px 2px 5px 5px;
}

/* taskbar */
.taskbar {
    height: 50px;
    display: flex;
    align-items: center;
    background: #d2d3e0;
    position: relative;
    flex: 1;
}
.start {
    margin-left: 21px;
}
.search {
    width: 425px;
    height: 49px;
    margin-left: 22px;
    padding: 0 0 2px 13px;
    display: flex;
    align-items: center;
    gap: 12px;
    background: #fff;
    font-size: 19px;
    color: #333;
    position: relative;
    flex: none;
}
.search-art {
    position: absolute;
    right: 0;
    bottom: 0;
}
.task-icons {
    display: flex;
    margin-left: 2px;
    flex: none;
}
.task {
    width: 60px;
    height: 50px;
    display: flex;
    align-items: center;
    justify-content: center;
    flex: none;
}
.task-view svg {
    margin-right: 5px;
}
.task-on {
    background: #dedfe9;
}
.ij {
    font: 700 11px "Liberation Sans", sans-serif;
    fill: #fff;
}
.doc-t {
    font: 700 18px "Liberation Sans", sans-serif;
    fill: #666;
    text-anchor: middle;
}
.tray {
    position: absolute;
    right: 0;
    top: 0;
    height: 50px;
    display: flex;
    align-items: center;
}
.tray-plug {
    margin-right: 2px;
}
.battery {
    width: 43px;
    height: 25px;
    padding: 2px;
    background: #fff;
    border-radius: 2px;
}
.battery span {
    display: block;
    height: 100%;
    background: #1f8f4e;
    color: #fff;
    font-size: 13px;
    line-height: 21px;
    text-align: center;
}
.tray-caret {
    margin-left: 8px;
}
.tray-i {
    margin-left: 9px;
}
.t-mic {
    margin-left: 16px;
}
.t-qq {
    margin-left: 15px;
}
.t-vol {
    margin-left: 7px;
}
.ime {
    margin-left: 11px;
    font-size: 18px;
    color: #111;
}
.clock {
    width: 86px;
    margin-left: 9px;
    display: flex;
    flex-direction: column;
    align-items: center;
    font-size: 15.500px;
    line-height: 24px;
    color: #222;
}
.tray-note {
    margin: 0 31px 0 18px;
}
.task-lines i {
    position: absolute;
    bottom: 0;
    height: 3px;
    background: #0a78d7;
}
.line-1 { left: 735px; width: 40px; }
.line-2 { left: 795px; width: 50px; }
.line-3 { left: 854px; width: 51px; }
.line-4 { left: 914px; width: 46px; }
.line-5 { left: 970px; width: 56px; }
.line-6 { left: 1035px; width: 49px; }

/* overlays */
.frame {
    position: absolute;
    background: #05d083;
}
.frame-tl-h { left: 0; top: 0; width: 120px; height: 6px; }
.frame-tl-v { left: 0; top: 0; width: 6px; height: 120px; }
.frame-tr-h { right: 0; top: 0; width: 120px; height: 6px; }
.frame-tr-v { right: 0; top: 0; width: 6px; height: 120px; }
.frame-bl-h { left: 0; bottom: 0; width: 120px; height: 6px; }
.frame-bl-v { left: 0; bottom: 0; width: 6px; height: 120px; }
.frame-br-h { right: 0; bottom: 0; width: 120px; height: 6px; }
.frame-br-v { right: 0; bottom: 0; width: 6px; height: 120px; }

.meeting-tag {
    position: absolute;
    left: 904px;
    top: 0;
    width: 112px;
    height: 25px;
    padding-left: 8px;
    display: flex;
    align-items: center;
    gap: 6px;
    background: #72736f;
    border-radius: 0 0 5px 5px;
    box-shadow: 0 1px 5px rgba(0, 0, 0, .3);
    color: #c7c8c6;
    font-size: 15px;
    white-space: nowrap;
}
.timer {
    position: absolute;
    left: 1692px;
    top: 61px;
    width: 56px;
    height: 56px;
    border-radius: 50%;
    background: linear-gradient(180deg, #3d8df5, #8fd6ff 60%, #a4e6ff);
    box-shadow: 0 0 0 2px #fff, 0 3px 6px rgba(0, 0, 0, .12);
    color: #dff3ff;
    font-size: 17px;
    line-height: 54px;
    text-align: center;
    white-space: nowrap;
}
.speaking {
    position: absolute;
    left: 1719px;
    right: 0;
    top: 178px;
    height: 44px;
    padding: 0 0 2px 14px;
    display: flex;
    align-items: center;
    background: #25272c;
    color: #fff;
    font-size: 15px;
}
.speaking-sep {
    width: 1px;
    height: 30px;
    margin: 0 12px 0 14px;
    background: #33363b;
}
.side-scroll {
    position: absolute;
    left: 1900px;
    width: 20px;
    background: #cdcdcd;
}
.side-scroll-top {
    top: 222px;
    height: 88px;
}
.side-scroll-bottom {
    top: 800px;
    height: 128px;
}
.side-arrow {
    position: absolute;
    left: 1903px;
    top: 961px;
}

.chat {
    position: absolute;
    left: 1737px;
    right: 0;
    top: 308px;
    height: 497px;
    background: #fff;
    border-radius: 4px 0 0 4px;
    box-shadow: 0 0 5px rgba(0, 0, 0, .45);
    display: flex;
    flex-direction: column;
}
.chat-head {
    height: 37px;
    border-bottom: 1px solid #e4e5e8;
    flex: none;
}
.chat-list {
    height: 321px;
    padding-left: 13px;
    background: #f7f8fc;
    font-size: 17px;
    color: #111;
    overflow: hidden;
    white-space: nowrap;
    flex: none;
}
.msg-clip {
    height: 7px;
    line-height: 2px;
    color: #333;
    transform: translateY(-5px);
}
.msg {
    height: 26px;
    line-height: 26px;
}
.msg.spaced {
    margin-bottom: 23px;
}
.msg-last {
    margin-top: 3px;
}
.name {
    color: #2a74e0;
}
.chat-send {
    height: 38px;
    margin-top: -1px;
    padding-left: 15px;
    display: flex;
    align-items: center;
    flex: none;
}
.send-label {
    width: 72px;
    font-size: 15px;
    color: #222;
}
.send-to {
    font-size: 17px;
    color: #2a74e0;
}
.send-caret {
    margin-left: 6px;
    border: 4px solid transparent;
    border-top: 5px solid #2a74e0;
    border-bottom: 0;
}
.chat-input {
    padding: 0 0 0 13px;
    margin-top: -2px;
    font-size: 16px;
    line-height: 26px;
    color: #d8d8d8;
}
```
